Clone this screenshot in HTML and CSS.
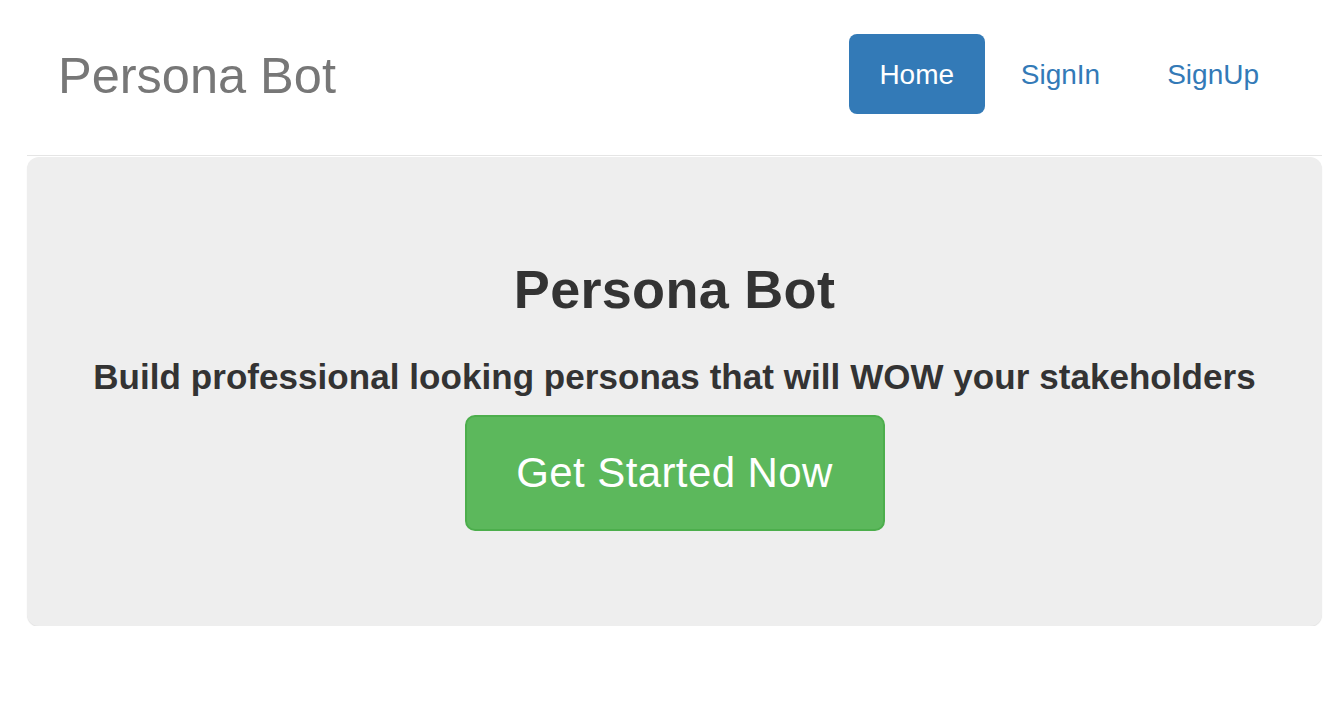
FILE: index.html
```html
<!DOCTYPE html>
<html lang="en">
<head>
<meta charset="utf-8">
<title>Persona Bot</title>
<link rel="stylesheet" href="styles.css">
</head>
<body>
<div class="page">
  <header class="header">
    <div class="brand">Persona Bot</div>
    <nav class="nav">
      <a class="nav-link active" href="#">Home</a>
      <a class="nav-link" href="#">SignIn</a>
      <a class="nav-link" href="#">SignUp</a>
    </nav>
  </header>
  <section class="jumbotron">
    <h1 class="title">Persona Bot</h1>
    <p class="lead">Build professional looking personas that will WOW your stakeholders</p>
    <a class="btn-start" href="#">Get Started Now</a>
  </section>
</div>
</body>
</html>
```
FILE: styles.css
```css
* { box-sizing: border-box; }
html, body { margin: 0; padding: 0; background: #fff; }
body {
  font-family: "Liberation Sans", Arial, Helvetica, sans-serif;
  color: #333;
}
.page {
  margin: 0 6px 0 27px;
}
.header {
  display: flex;
  justify-content: space-between;
  align-items: flex-start;
  height: 156px;
  padding: 34px 0 0 0;
  border-bottom: 1px solid #e5e5e5;
}
.brand {
  font-size: 50.5px;
  line-height: 84px;
  height: 84px;
  color: #777;
  padding-left: 31px;
}
.nav {
  display: flex;
  gap: 5px;
  margin-right: 32px;
}
.nav-link {
  display: block;
  font-size: 28px;
  line-height: 82px;
  height: 80px;
  padding: 0 31px;
  color: #337ab7;
  text-decoration: none;
  border-radius: 8px;
}
.nav-link.active {
  background: #337ab7;
  color: #fff;
  width: 136px;
  text-align: center;
  padding: 0;
}
.jumbotron {
  margin-top: 1px;
  background: #eee;
  border-radius: 12px;
  box-shadow: 0 1px 1px #e2e2e2;
  height: 469px;
  display: flex;
  flex-direction: column;
  align-items: center;
  padding-top: 105px;
}
.title {
  margin: 0;
  font-size: 54px;
  line-height: 54px;
  font-weight: bold;
  color: #333;
  letter-spacing: 0.3px;
}
.lead {
  margin: 44px 0 0 0;
  font-size: 35px;
  line-height: 34px;
  font-weight: bold;
  color: #333;
  letter-spacing: 0.05px;
}
.btn-start {
  margin-top: 21px;
  display: flex;
  align-items: center;
  justify-content: center;
  width: 420px;
  height: 116px;
  background: #5cb85c;
  border: 2px solid #4cae4c;
  border-radius: 10px;
  color: #fff;
  font-size: 42px;
  letter-spacing: 0.4px;
  text-decoration: none;
}
```
